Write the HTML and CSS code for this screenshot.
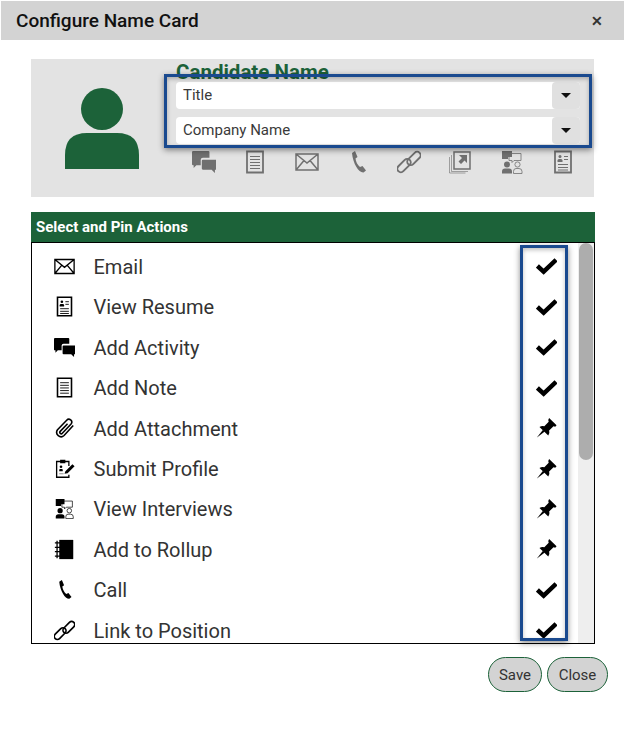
FILE: index.html
```html
<!DOCTYPE html>
<html lang="en">
<head>
    <meta charset="UTF-8">
    <title>Configure Name Card</title>
    <link rel="stylesheet" href="styles.css">
</head>
<body>
    <svg class="sprites" width="0" height="0">
        <symbol id="i-mail" viewBox="0 0 24 24">
            <path fill="none" stroke="currentColor" stroke-width="1.500" d="M1 4h22v16H1zM1 4l11 9 11-9M1 20l8-9.500M23 20l-8-9.500"/>
        </symbol>
        <symbol id="i-chat" viewBox="1 1 22 22" overflow="visible">
            <path fill="currentColor" d="M1 3q0-1 1-1h14q1 0 1 1v5h-6q-2 0-2 2v5H5l-2.500 2.500V15H2q-1 0-1-1zM11 10h12q1 0 1 1v7q0 1-1 1h-1v3l-3-3h-8q-1 0-1-1v-7q0-1 1-1z"/>
        </symbol>
        <symbol id="i-note" viewBox="0 0 24 24">
            <path fill="none" stroke="currentColor" stroke-width="1.800" d="M4 1.500h16v21H4z"/>
            <path fill="none" stroke="currentColor" d="M7 6.500h10M7 9.500h10M7 12.500h10M7 15.500h10M7 18.500h10"/>
        </symbol>
        <symbol id="i-phone" viewBox="0 0 24 24">
            <path fill="currentColor" d="M6 3l3-2 2.500 6-2 1.500c.3 3 2 6.500 4.500 8.500l2.500-1 3.500 4.500-2.500 2C13 23 7 14 6 3z"/>
        </symbol>
        <symbol id="i-link" viewBox="0 0 24 24" overflow="visible">
            <g fill="none" stroke="currentColor" stroke-width="1.900" transform="rotate(-45 12 12)">
                <rect x="-2" y="7.500" width="16" height="7" rx="3.500"/>
                <rect x="10" y="9.500" width="16" height="7" rx="3.500"/>
            </g>
        </symbol>
        <symbol id="i-open" viewBox="0 0 24 24">
            <path fill="none" stroke="currentColor" stroke-width="1.500" d="M6 2h16v17H6z"/>
            <path fill="none" stroke="currentColor" opacity=".6" d="M3.500 5v16.500H20M1.500 7v16h16"/>
            <path fill="currentColor" d="M11 5h8v8l-2.500-2.500-3.500 3.500-2.500-2.500 3.500-3.500z"/>
        </symbol>
        <symbol id="i-interview" viewBox="0 0 24 24">
            <path fill="currentColor" d="M2 1h10v6H8v2H2z"/>
            <path fill="none" stroke="currentColor" stroke-width=".8" d="M9 3.500h12v7h-7l-2 2v-2H9z"/>
            <circle cx="7" cy="14.500" r="3" fill="currentColor"/>
            <path fill="currentColor" d="M2 23.500v-2q0-3 3-3h4q3 0 3 3v2z"/>
            <circle cx="17.500" cy="14.500" r="2.600" fill="none" stroke="currentColor" stroke-width=".8"/>
            <path fill="none" stroke="currentColor" stroke-width=".8" d="M13.500 23.500v-2q0-3 2.500-3h3q3 0 3 3v2z"/>
        </symbol>
        <symbol id="i-resume" viewBox="0 0 24 24">
            <path fill="none" stroke="currentColor" stroke-width="1.800" d="M4 1.500h16v21H4z"/>
            <circle cx="9" cy="6.500" r="1.500" fill="currentColor"/>
            <path fill="currentColor" d="M6.500 12v-1.500q0-1.500 1.500-1.500h2q1.500 0 1.500 1.500V12z"/>
            <path fill="none" stroke="currentColor" d="M13 6.500h4M13 9.500h4M7 14.500h10M7 17.500h10M7 20h10"/>
        </symbol>
        <symbol id="i-clip" viewBox="0 0 24 24" overflow="visible">
            <path fill="none" stroke="currentColor" stroke-width="1.800" d="M22 8.500L11.500 20a5 5 0 0 1-7.500-6.500L14.500 2.500a3.300 3.300 0 0 1 5 4.300L9.500 17.500a1.600 1.600 0 0 1-2.400-2.200L15.500 6.500"/>
        </symbol>
        <symbol id="i-submit" viewBox="0 0 24 24">
            <path fill="none" stroke="currentColor" stroke-width="1.500" d="M17 9V4H3v18h14v-3"/>
            <path fill="currentColor" d="M7 2h6v4H7z"/>
            <circle cx="8" cy="10" r="1.500" fill="currentColor"/>
            <path fill="currentColor" d="M6 15v-1.500q0-1 1-1h2q1 0 1 1V15zM12 18l1-3 8-8 2.500 2.500-8 8z"/>
            <path fill="none" stroke="currentColor" opacity=".5" d="M6 18h5"/>
        </symbol>
        <symbol id="i-rollup" viewBox="0 0 24 24">
            <path fill="currentColor" d="M6 1h16v22H6z"/>
            <path fill="none" stroke="currentColor" stroke-width="1.500" d="M1 4.500h7M1 9.500h7M1 14.500h7M1 19.500h7M3.500 2v20"/>
        </symbol>
        <symbol id="i-check" viewBox="1 1 22 22" overflow="visible">
            <path fill="none" stroke="currentColor" stroke-width="4.600" d="M2.500 12.500l6.500 6L22 6"/>
        </symbol>
        <symbol id="i-pin" viewBox="0 0 24 24">
            <path fill="currentColor" d="M15 1l8.500 8.500-1.500 1.500-2-.5-5 5q1 3-1 5.500L4 11.500q2.500-2 5.500-1l5-5-.5-2z"/>
            <path fill="currentColor" d="M1 23.500l7-9 2 2z"/>
        </symbol>
    </svg>

    <div class="title-bar">
        <span class="title-text">Configure Name Card</span>
        <span class="title-close">&#10005;</span>
    </div>

    <div class="content">
        <div class="card-preview">
            <div class="avatar">
                <svg width="74" height="82" viewBox="0 0 74 82">
                    <circle cx="37" cy="21" r="21" fill="#1c6239"/>
                    <path fill="#1c6239" d="M0 81V67q0-22 22-22h30q22 0 22 22v14z"/>
                </svg>
            </div>
            <div class="card-fields">
                <div class="candidate-name">Candidate Name</div>
                <div class="select-row">
                    <span class="select-text">Title</span>
                    <span class="select-btn"><span class="caret"></span></span>
                </div>
                <div class="select-row">
                    <span class="select-text">Company Name</span>
                    <span class="select-btn"><span class="caret"></span></span>
                </div>
                <div class="card-icons">
                    <svg><use href="#i-chat"/></svg>
                    <svg><use href="#i-note"/></svg>
                    <svg><use href="#i-mail"/></svg>
                    <svg><use href="#i-phone"/></svg>
                    <svg><use href="#i-link"/></svg>
                    <svg><use href="#i-open"/></svg>
                    <svg><use href="#i-interview"/></svg>
                    <svg><use href="#i-resume"/></svg>
                </div>
            </div>
        </div>

        <div class="section-head">Select and Pin Actions</div>
        <div class="action-box">
            <div class="action-list">
                <div class="action"><svg class="action-icon"><use href="#i-mail"/></svg><span class="action-name">Email</span><svg class="action-mark"><use href="#i-check"/></svg></div>
                <div class="action"><svg class="action-icon"><use href="#i-resume"/></svg><span class="action-name">View Resume</span><svg class="action-mark"><use href="#i-check"/></svg></div>
                <div class="action"><svg class="action-icon"><use href="#i-chat"/></svg><span class="action-name">Add Activity</span><svg class="action-mark"><use href="#i-check"/></svg></div>
                <div class="action"><svg class="action-icon"><use href="#i-note"/></svg><span class="action-name">Add Note</span><svg class="action-mark"><use href="#i-check"/></svg></div>
                <div class="action"><svg class="action-icon"><use href="#i-clip"/></svg><span class="action-name">Add Attachment</span><svg class="action-mark"><use href="#i-pin"/></svg></div>
                <div class="action"><svg class="action-icon"><use href="#i-submit"/></svg><span class="action-name">Submit Profile</span><svg class="action-mark"><use href="#i-pin"/></svg></div>
                <div class="action"><svg class="action-icon"><use href="#i-interview"/></svg><span class="action-name">View Interviews</span><svg class="action-mark"><use href="#i-pin"/></svg></div>
                <div class="action"><svg class="action-icon"><use href="#i-rollup"/></svg><span class="action-name">Add to Rollup</span><svg class="action-mark"><use href="#i-pin"/></svg></div>
                <div class="action"><svg class="action-icon"><use href="#i-phone"/></svg><span class="action-name">Call</span><svg class="action-mark"><use href="#i-check"/></svg></div>
                <div class="action"><svg class="action-icon"><use href="#i-link"/></svg><span class="action-name">Link to Position</span><svg class="action-mark"><use href="#i-check"/></svg></div>
            </div>
            <div class="scroll-track"><div class="scroll-thumb"></div></div>
        </div>

        <div class="buttons">
            <button class="btn btn-save">Save</button>
            <button class="btn btn-close">Close</button>
        </div>
    </div>

    <div class="highlight highlight-fields"></div>
    <div class="highlight highlight-marks"></div>
</body>
</html>
```

FILE: styles.css
```css
body {
    margin: 0;
    font-family: Roboto, "Liberation Sans", sans-serif;
    background-color: #fff;
    color: #333;
}
.sprites {
    position: absolute;
}
.title-bar {
    display: flex;
    align-items: center;
    justify-content: space-between;
    height: 39px;
    margin: 1px 2px 0 1px;
    padding: 0 21px 0 15px;
    background-color: #d3d3d3;
}
.title-text {
    font-size: 19px;
    font-weight: 500;
    color: #111;
}
.title-close {
    font-size: 14px;
    font-weight: bold;
    color: #333;
}
.content {
    padding: 19px 31px 0;
}
.card-preview {
    display: flex;
    width: 563px;
    height: 138px;
    background-color: #e3e3e3;
}
.avatar {
    width: 145px;
    padding: 29px 0 0 34px;
    box-sizing: border-box;
}
.card-fields {
    width: 404px;
}
.candidate-name {
    height: 23px;
    padding: 2px 0 0;
    box-sizing: border-box;
    font-size: 20.5px;
    line-height: 22px;
    font-weight: bold;
    color: #1c6239;
}
.select-row {
    display: flex;
    align-items: center;
    justify-content: space-between;
    height: 27px;
    margin-bottom: 8px;
    border-radius: 4px;
    background-color: #fff;
}
.select-text {
    padding: 0 0 2px 7px;
    font-size: 15px;
    color: #3a3a3a;
}
.select-btn {
    display: flex;
    align-items: center;
    justify-content: center;
    width: 28px;
    height: 27px;
    border-radius: 4px;
    background-color: #e0e0e0;
}
.caret {
    margin-bottom: 1px;
    border-top: 5px solid #111;
    border-left: 5px solid transparent;
    border-right: 5px solid transparent;
}
.card-icons {
    display: flex;
    justify-content: space-between;
    align-items: center;
    margin: -2px 5px 0 16px;
    color: #707070;
}
.card-icons svg {
    width: 24px;
    height: 24px;
}
.section-head {
    width: 559px;
    height: 30px;
    margin-top: 15px;
    padding-left: 5px;
    font-size: 15px;
    line-height: 30px;
    font-weight: bold;
    color: #fff;
    background-color: #1c6239;
}
.action-box {
    display: flex;
    width: 562px;
    height: 400px;
    border: 1px solid #000;
    overflow: hidden;
}
.action-list {
    flex: 1;
    padding-top: 3.6px;
}
.action {
    display: flex;
    align-items: center;
    height: 40.45px;
    color: #333;
}
.action-icon {
    width: 21px;
    height: 21px;
    margin: 0 0 1px 22px;
    color: #000;
}
.action-name {
    flex: 1;
    margin-left: 18.5px;
    font-size: 20px;
}
.action-mark {
    width: 21px;
    height: 21px;
    margin: 0 21px 2px 0;
    color: #000;
}
.scroll-track {
    width: 16px;
    background-color: #eee;
}
.scroll-thumb {
    width: 14px;
    height: 217px;
    margin-left: 1px;
    border-radius: 7px;
    background-color: #adadad;
}
.buttons {
    display: flex;
    justify-content: flex-end;
    gap: 5px;
    width: 577px;
    margin-top: 13px;
}
.btn {
    height: 35px;
    padding: 0;
    border: 1px solid #1c6239;
    border-radius: 18px;
    background-color: #d3d3d3;
    color: #333;
    font-family: inherit;
    font-size: 15px;
}
.btn-save {
    width: 54px;
}
.btn-close {
    width: 61px;
}
.highlight {
    position: absolute;
    box-sizing: border-box;
    border: 3px solid #1a4a8f;
    box-shadow: 0 2px 6px rgba(0, 0, 0, 0.45), inset 0 2px 4px rgba(0, 0, 0, 0.25);
}
.highlight-fields {
    left: 164px;
    top: 74px;
    width: 428px;
    height: 74px;
}
.highlight-marks {
    left: 520px;
    top: 245px;
    width: 48px;
    height: 396px;
}
```
